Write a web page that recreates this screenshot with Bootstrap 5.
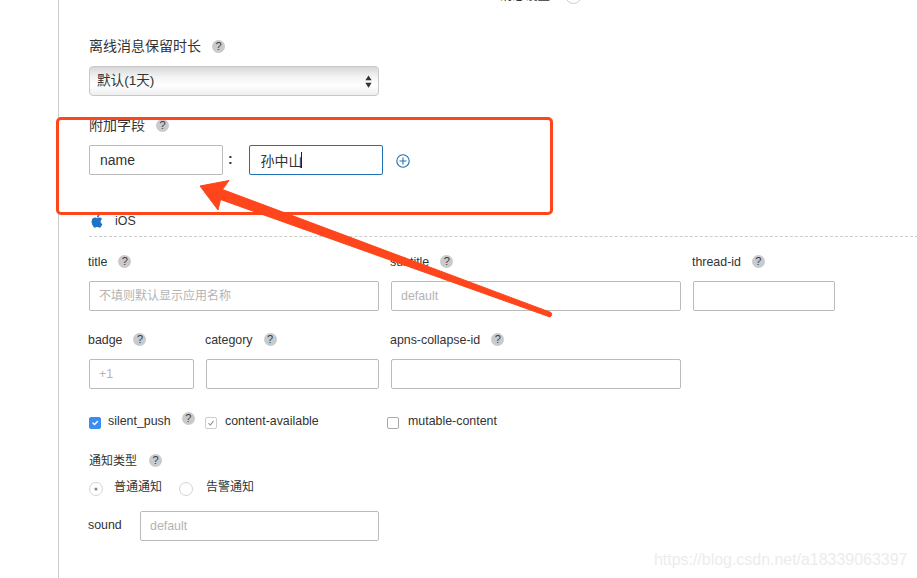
<!DOCTYPE html>
<html lang="zh">
<head>
<meta charset="utf-8">
<title>推送设置</title>
<link href="https://cdn.jsdelivr.net/npm/bootstrap@5.3.0/dist/css/bootstrap.min.css" rel="stylesheet">
<style>
html,body{height:578px;overflow:hidden;background:#fff}
body{font-family:"Liberation Sans","Noto Sans CJK SC",sans-serif;font-size:12.4px;color:#333}
.shell{margin-left:58px;height:578px;border-left:1px solid #ccc;padding-left:30px;position:relative}
.top-clip{height:4px;overflow:hidden;padding-left:411px;gap:15px}
.top-clip span{font-size:12.5px;line-height:14px;margin-top:-11px}
.top-radio{width:17px;height:17px;border:1px solid #ccc;border-radius:50%;margin-top:-13px;flex:none}
.lbl{height:20px;line-height:20px;font-size:12.4px;margin-bottom:9px;margin-left:-1px;white-space:nowrap}
.lbl-big{font-size:14px;margin-bottom:10px;margin-left:0}
.tip{display:inline-flex;align-items:center;justify-content:center;width:13px;height:13px;border-radius:50%;background:#c8cacc;color:#3a3a3a;font-size:11px;font-weight:400;line-height:1;margin-left:11px;vertical-align:1px}
.fld{height:30px;min-height:30px;padding:0 9px;font-size:12.4px;border:1px solid #bbb;border-radius:2px;color:#333}
.fld::placeholder{color:#b4b4b4;opacity:1}
.fld-cjk{font-size:12px}
.fld-lg{font-size:14px;padding:0 10px}
.fld-on,.fld-on:focus{border-color:#1f6fb5;box-shadow:none;padding-left:10.5px}
.sel{width:290px;height:30px;min-height:30px;padding:0 24px 0 7px;font-size:13.6px;border:1px solid #c8c8c8;border-radius:4px;color:#333;
background-color:#fff;background-image:url("data:image/svg+xml,%3Csvg xmlns='http://www.w3.org/2000/svg' viewBox='0 0 8 14'%3E%3Cpath fill='%23333' d='M4 0l3.6 5.5H.4zM4 14l3.6-5.5H.4z'/%3E%3C/svg%3E"),linear-gradient(#d8d8d8,#f3f3f3 35%,#fff 65%,#eee);background-repeat:no-repeat,repeat;background-position:right 6px center,0 0;background-size:7px 13px,auto}
.w-134{width:134px}.w-239{width:239px}
.col-gap{gap:12px}
.cell-wide{width:290px}.cell-mid{width:173px}.cell-sm{width:105px}.cell-tid{width:142px}
.sec-1{margin-top:32px}.sec-2{margin-top:19px}
.colon{width:26px;padding-left:5px;font-size:14px;font-weight:700;line-height:28px}
.caret-wrap{position:relative;display:block}
.caret-line{position:absolute;left:52px;top:7px;width:1px;height:16px;background:#222}
.plus{margin-left:13px}
.ios-row{margin-top:38px;height:16px;line-height:16px}
.ios-row svg{margin-right:10px}
.dash{margin-top:7px;border-top:1px dashed #ccc;margin-right:-1px}
.row-a{margin-top:15px}.row-b{margin-top:19px}
.chk-row{margin-top:24px;height:16px;line-height:16px}
.form-check-input.box{width:12px;height:12px;margin:4px 0 0;border:1px solid #aaa;border-radius:2px;flex:none}
.form-check-input.box:checked{background-color:#3b8cf0;border-color:#3b8cf0}
.form-check-input.box-off:checked{background-color:#fff;border-color:#ccc;opacity:1;background-image:url("data:image/svg+xml,%3Csvg xmlns='http://www.w3.org/2000/svg' viewBox='0 0 12 12'%3E%3Cpath fill='none' stroke='%23999' stroke-width='1.3' d='M3 6.2l2.2 2.3L9 3.5'/%3E%3C/svg%3E")}
.chk-a{width:116px}.chk-b{width:182px}
.chk-text{margin-left:7px;white-space:nowrap}
.chk-b .chk-text{margin-left:8px}
.chk-c .chk-text{margin-left:9px}
.chk-a .tip{margin-left:11px;margin-top:-1px;flex:none}
.kind{margin-top:22px;margin-bottom:0;font-size:12px;margin-left:0}
.kind .tip{margin-left:12px}
.radio-row{margin-top:8px;height:16px;line-height:16px;font-size:12px}
.form-check-input.rad{width:14px;height:14px;margin:3px 0 0;border:1px solid #d4d4d4;flex:none;opacity:1}
.form-check-input.rad:checked{background-color:#fff;border-color:#d4d4d4;opacity:1;background-image:url("data:image/svg+xml,%3Csvg xmlns='http://www.w3.org/2000/svg' viewBox='0 0 14 14'%3E%3Ccircle cx='7' cy='7' r='1.8' fill='%23888'/%3E%3C/svg%3E")}
.rad-a{width:90px}
.rad-text{margin-left:11px}
.rad-b .rad-text{margin-left:13px}
.sound{margin-top:16px}
.sound span{width:51px;margin-top:-2px;margin-left:-1px;margin-right:1px}
.anno-box{position:absolute;left:56px;top:117px;width:497px;height:98px;border:3px solid #ff451b;border-radius:5px;pointer-events:none}
.anno-arrow{position:absolute;left:0;top:0;pointer-events:none}
.wm{position:absolute;left:654px;top:550px;font-size:16px;line-height:20px;color:#ececec;letter-spacing:-.03px;white-space:nowrap}
</style>
</head>
<body>
<main class="shell">
  <div class="top-clip d-flex"><span>消息设置</span><i class="top-radio"></i></div>

  <div class="sec-1">
    <div class="lbl lbl-big">离线消息保留时长<span class="tip">?</span></div>
    <select class="form-select sel"><option>默认(1天)</option></select>
  </div>

  <div class="sec-2">
    <div class="lbl lbl-big">附加字段<span class="tip">?</span></div>
    <div class="d-flex align-items-start">
      <input class="form-control fld fld-lg w-134" value="name">
      <span class="colon">:</span>
      <span class="caret-wrap"><input class="form-control fld fld-lg fld-on w-134" value="孙中山"><i class="caret-line"></i></span>
      <svg class="plus" width="14" height="30" viewBox="0 0 14 30" fill="none" stroke="#1f6fb5" stroke-width="1.1"><circle cx="7" cy="16" r="6.2"/><path d="M7 12.500v7M3.500 16h7"/></svg>
    </div>
  </div>

  <div class="ios-row d-flex align-items-center">
    <svg width="16" height="16" viewBox="0 0 24 24" fill="#2272c3"><path d="M18.71 19.5c-.83 1.24-1.71 2.45-3.05 2.47-1.34.03-1.77-.79-3.29-.79-1.53 0-2 .77-3.27.82-1.31.05-2.3-1.32-3.14-2.53C4.25 17 2.94 12.45 4.7 9.39c.87-1.52 2.43-2.48 4.12-2.51 1.28-.02 2.5.87 3.29.87.78 0 2.26-1.07 3.81-.91.65.03 2.47.26 3.64 1.98-.09.06-2.17 1.28-2.15 3.81.03 3.02 2.65 4.03 2.68 4.04-.03.07-.42 1.44-1.38 2.83M13 3.5c.73-.83 1.94-1.46 2.94-1.5.13 1.17-.34 2.35-1.04 3.19-.69.85-1.83 1.51-2.95 1.42-.15-1.15.41-2.35 1.05-3.11z"/></svg>
    <span>iOS</span>
  </div>
  <div class="dash"></div>

  <div class="row-a d-flex col-gap">
    <div class="cell-wide"><div class="lbl">title<span class="tip">?</span></div><input class="form-control fld fld-cjk" placeholder="不填则默认显示应用名称"></div>
    <div class="cell-wide"><div class="lbl">subtitle<span class="tip">?</span></div><input class="form-control fld" placeholder="default"></div>
    <div class="cell-tid"><div class="lbl">thread-id<span class="tip">?</span></div><input class="form-control fld"></div>
  </div>

  <div class="row-b d-flex col-gap">
    <div class="cell-sm"><div class="lbl">badge<span class="tip">?</span></div><input class="form-control fld" placeholder="+1"></div>
    <div class="cell-mid"><div class="lbl">category<span class="tip">?</span></div><input class="form-control fld"></div>
    <div class="cell-wide"><div class="lbl">apns-collapse-id<span class="tip">?</span></div><input class="form-control fld"></div>
  </div>

  <div class="chk-row d-flex">
    <label class="chk-a d-flex"><input type="checkbox" class="form-check-input box" checked><span class="chk-text">silent_push</span><span class="tip">?</span></label>
    <label class="chk-b d-flex"><input type="checkbox" class="form-check-input box box-off" checked disabled><span class="chk-text">content-available</span></label>
    <label class="chk-c d-flex"><input type="checkbox" class="form-check-input box"><span class="chk-text">mutable-content</span></label>
  </div>

  <div class="lbl kind">通知类型<span class="tip">?</span></div>

  <div class="radio-row d-flex">
    <label class="rad-a d-flex"><input type="radio" name="kind" class="form-check-input rad" checked disabled><span class="rad-text">普通通知</span></label>
    <label class="rad-b d-flex"><input type="radio" name="kind" class="form-check-input rad" disabled><span class="rad-text">告警通知</span></label>
  </div>

  <div class="sound d-flex align-items-center">
    <span>sound</span>
    <input class="form-control fld w-239" placeholder="default">
  </div>
</main>

<div class="anno-box"></div>
<svg class="anno-arrow" width="917" height="578" viewBox="0 0 917 578"><path fill="#ff451b" stroke="#ff451b" stroke-linejoin="round" d="M200 186L229 180.500L222.500 189.500L551 312.500Q553 315 550 317L220.500 199.500L218 210Z"/></svg>
<div class="wm">https://blog.csdn.net/a18339063397</div>
</body>
</html>
